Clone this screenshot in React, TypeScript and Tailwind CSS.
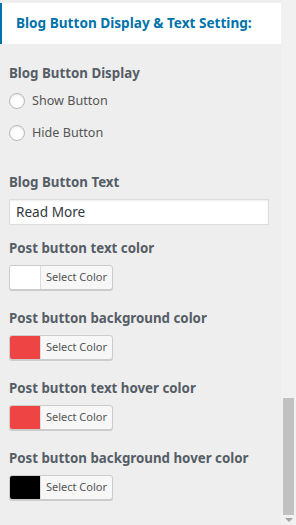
import React from "react";

const font = { fontFamily: '"Noto Sans", "Open Sans", sans-serif' };

function Heading({ children }: { children: React.ReactNode }) {
  return (
    <div className="h-[20px] flex items-center text-[13.3px] font-bold text-[#555d66] leading-none whitespace-nowrap">
      {children}
    </div>
  );
}

function ColorPick({ color, label }: { color: string; label: string }) {
  return (
    <div className="mt-[19px] first:mt-[14px]">
      <Heading>{label}</Heading>
      <div className="mt-[6px] flex h-[25px] w-[104px] rounded-[3px] border border-[#cccccc] bg-[#f7f7f7] shadow-[0_1px_0_#cccccc] overflow-hidden">
        <div className="w-[31px] h-full border-r border-[#dddddd]" style={{ backgroundColor: color }} />
        <div className="flex-1 flex items-center justify-center text-[11px] text-[#555555]">Select Color</div>
      </div>
    </div>
  );
}

function Radio({ label }: { label: string }) {
  return (
    <div className="h-[32px] flex items-center gap-[7px]">
      <span className="w-[16px] h-[16px] rounded-full border border-[#b4b9be] bg-white shadow-[inset_0_1px_2px_rgba(0,0,0,0.1)]" />
      <span className="text-[12.6px] text-[#555555]">{label}</span>
    </div>
  );
}

export default function App() {
  return (
    <div className="flex w-[296px] h-[525px] bg-[#eeeeee] overflow-hidden" style={font}>
      <div className="w-[281px] flex flex-col">
        <div className="mt-[3px] h-[41px] bg-white border-l-2 border-[#0073aa] flex items-center pl-[14px] text-[13.6px] font-bold text-[#0073aa] whitespace-nowrap">
          Blog Button Display &amp; Text Setting:
        </div>
        <div className="px-[9px]">
          <div className="mt-[20px]">
            <Heading>Blog Button Display</Heading>
          </div>
          <div className="mt-[1px]">
            <Radio label="Show Button" />
            <Radio label="Hide Button" />
          </div>
          <div className="mt-[24px]">
            <Heading>Blog Button Text</Heading>
          </div>
          <div className="mt-[6px] h-[26px] w-[260px] bg-white border border-[#dddddd] shadow-[inset_0_1px_2px_rgba(0,0,0,0.07)] flex items-center px-[6px] text-[13.6px] text-[#32373c]">
            Read More
          </div>
          <div className="flex flex-col">
            <ColorPick color="#ffffff" label="Post button text color" />
            <ColorPick color="#ef4444" label="Post button background color" />
            <ColorPick color="#ef4444" label="Post button text hover color" />
            <ColorPick color="#000000" label="Post button background hover color" />
          </div>
        </div>
      </div>
      <div className="w-[15px] h-full bg-[#f1f1f1] flex flex-col items-center">
        <div className="h-[398px]" />
        <div className="w-[11px] h-[117px] bg-[#c1c1c1]" />
        <div className="mt-[3px] w-0 h-0 border-l-[4px] border-r-[4px] border-t-[4px] border-l-transparent border-r-transparent border-t-[#a3a3a3]" />
      </div>
    </div>
  );
}
